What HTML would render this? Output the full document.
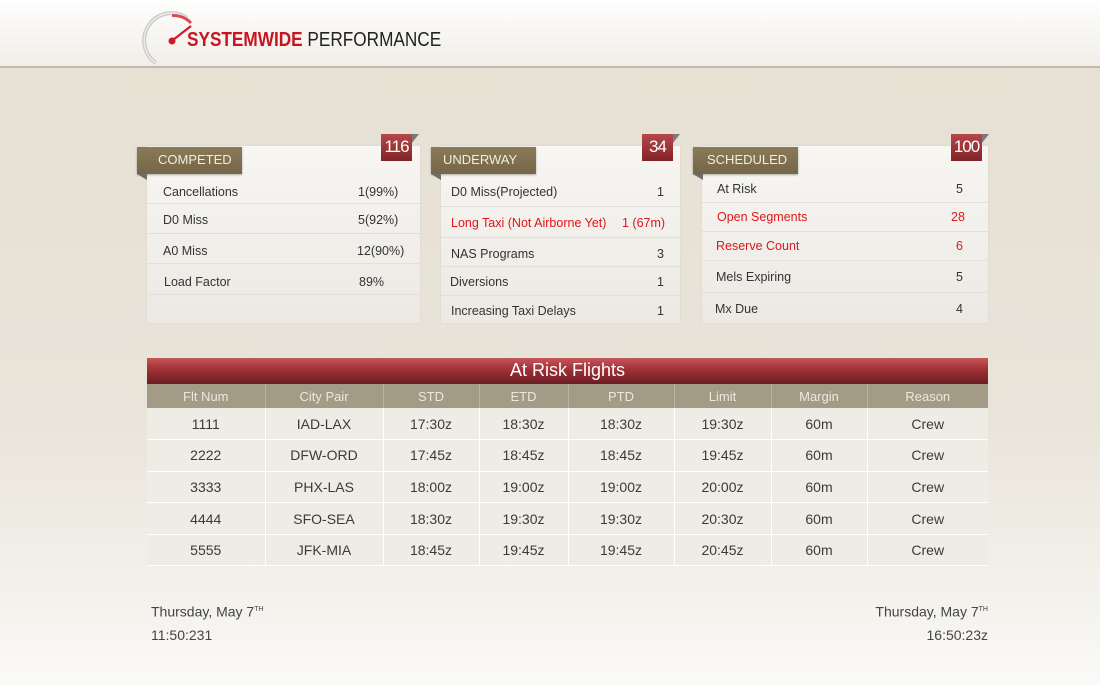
<!DOCTYPE html>
<html><head><meta charset="utf-8"><style>
*{margin:0;padding:0;box-sizing:border-box}
body{width:1100px;height:685px;overflow:hidden;font-family:"Liberation Sans","DejaVu Sans",sans-serif;background:#e9e4d9;position:relative;color:#333}
.bg{position:absolute;left:0;top:0;width:1100px;height:685px;background:linear-gradient(#e6e0d3 0,#e9e4d9 60%,#f4f2ed 88%,#fbfaf8 100%)}
.hdr{position:absolute;left:0;top:0;width:1100px;height:68px;background:linear-gradient(#fefefe,#f1eee8);border-bottom:2px solid #bfb9ae}
.a{position:absolute;white-space:nowrap}
.panel{position:absolute;background:linear-gradient(#f7f6f3,#ece9e3);box-shadow:0 0 2px rgba(0,0,0,.08)}
.tab{position:absolute;height:27px;background:linear-gradient(#8a7b58,#746646);color:#f2ede0;font-size:13px;line-height:26px;padding-left:21px;box-shadow:0 1px 2px rgba(0,0,0,.3)}
.tab:after{content:"";position:absolute;left:0;bottom:-6px;border-top:6px solid #6c6c6c;border-left:10px solid transparent}
.badge{position:absolute;height:27px;background:linear-gradient(#b5484b,#822327);color:#fff;font-size:17px;line-height:26px;text-align:center;letter-spacing:-1px}
.badge:after{content:"";position:absolute;right:-7px;top:0;border-top:9px solid #7a7a7a;border-right:7px solid transparent}
.row{position:absolute;font-size:12.5px;border-bottom:1px solid #e2e0db}
.r{color:#e0161b}
table{position:absolute;left:147px;top:384px;width:841px;border-collapse:collapse}
th{height:24px;background:#a39b86;color:#ece8dd;font-weight:normal;font-size:13px;border-left:1px solid #bab3a0}
td{height:31.6px;text-align:center;font-size:14px;color:#3a3a3a;border-left:1px solid #ffffff;border-bottom:1px solid #fff;background:#efece6}
th:first-child,td:first-child{border-left:none}
</style></head><body>
<div class="bg"></div>
<div class="hdr"></div>
<svg class="a" style="left:141px;top:8px" width="60" height="60" viewBox="0 0 60 60">
<path d="M15 55 A24 24 0 0 1 46 10" fill="none" stroke="#c9c9c9" stroke-width="4"/>
<path d="M15 55 A24 24 0 0 1 46 10" fill="none" stroke="#ececec" stroke-width="1.5"/>
<path d="M31 7.5 A24 24 0 0 1 50 15" fill="none" stroke="#d94a50" stroke-width="3"/>
<line x1="32" y1="32" x2="50" y2="18" stroke="#d11a22" stroke-width="2.2"/>
<circle cx="31" cy="33" r="3.5" fill="#d11a22"/>
</svg>
<div class="a" style="left:187px;top:29px;font-size:20px;line-height:22px;transform:scaleX(.86);transform-origin:0 0"><b style="color:#c8141f">SYSTEMWIDE</b> <span style="color:#222">PERFORMANCE</span></div>

<div class="panel" style="left:147px;top:146px;width:273px;height:177px"></div>
<div class="tab" style="left:137px;top:147px;width:105px">COMPETED</div>
<div class="badge" style="left:381px;top:134px;width:31px">116</div>
<div class="row" style="left:147px;top:180px;width:273px;height:24px"><span class="a" style="left:16px;top:5px">Cancellations</span><span class="a" style="left:211px;top:5px">1(99%)</span></div>
<div class="row" style="left:147px;top:204px;width:273px;height:30px"><span class="a" style="left:16px;top:9px">D0 Miss</span><span class="a" style="left:211px;top:9px">5(92%)</span></div>
<div class="row" style="left:147px;top:234px;width:273px;height:30px"><span class="a" style="left:16px;top:10px">A0 Miss</span><span class="a" style="left:210px;top:10px">12(90%)</span></div>
<div class="row" style="left:147px;top:264px;width:273px;height:31px"><span class="a" style="left:17px;top:11px">Load Factor</span><span class="a" style="left:212px;top:11px">89%</span></div>

<div class="panel" style="left:441px;top:146px;width:239px;height:177px"></div>
<div class="tab" style="left:431px;top:147px;width:105px;padding-left:12px">UNDERWAY</div>
<div class="badge" style="left:642px;top:134px;width:31px">34</div>
<div class="row" style="left:441px;top:178px;width:239px;height:29px"><span class="a" style="left:10px;top:7px">D0 Miss(Projected)</span><span class="a" style="left:216px;top:7px">1</span></div>
<div class="row r" style="left:441px;top:207px;width:239px;height:31px"><span class="a" style="left:10px;top:9px">Long Taxi (Not Airborne Yet)</span><span class="a" style="left:181px;top:9px">1 (67m)</span></div>
<div class="row" style="left:441px;top:238px;width:239px;height:29px"><span class="a" style="left:10px;top:9px">NAS Programs</span><span class="a" style="left:216px;top:9px">3</span></div>
<div class="row" style="left:441px;top:267px;width:239px;height:29px"><span class="a" style="left:9px;top:8px">Diversions</span><span class="a" style="left:216px;top:8px">1</span></div>
<div class="row" style="left:441px;top:296px;width:239px;height:27px;border:none"><span class="a" style="left:10px;top:8px">Increasing Taxi Delays</span><span class="a" style="left:216px;top:8px">1</span></div>

<div class="panel" style="left:702px;top:146px;width:286px;height:177px"></div>
<div class="tab" style="left:693px;top:147px;width:105px;padding-left:14px">SCHEDULED</div>
<div class="badge" style="left:951px;top:134px;width:31px">100</div>
<div class="row" style="left:702px;top:175px;width:286px;height:28px"><span class="a" style="left:15px;top:7px">At Risk</span><span class="a" style="left:254px;top:7px">5</span></div>
<div class="row r" style="left:702px;top:203px;width:286px;height:29px"><span class="a" style="left:15px;top:7px">Open Segments</span><span class="a" style="left:249px;top:7px">28</span></div>
<div class="row r" style="left:702px;top:232px;width:286px;height:29px"><span class="a" style="left:14px;top:7px">Reserve Count</span><span class="a" style="left:254px;top:7px">6</span></div>
<div class="row" style="left:702px;top:261px;width:286px;height:32px"><span class="a" style="left:14px;top:9px">Mels Expiring</span><span class="a" style="left:254px;top:9px">5</span></div>
<div class="row" style="left:702px;top:293px;width:286px;height:30px;border:none"><span class="a" style="left:13px;top:9px">Mx Due</span><span class="a" style="left:254px;top:9px">4</span></div>

<div class="a" style="left:147px;top:358px;width:841px;height:26px;background:linear-gradient(#c5575b,#9e3036 45%,#6a1d22);color:#fff;font-size:18px;line-height:25px;text-align:center">At Risk Flights</div>
<table>
<tr><th style="width:118px">Flt Num</th><th style="width:118px">City Pair</th><th style="width:96px">STD</th><th style="width:89px">ETD</th><th style="width:106px">PTD</th><th style="width:97px">Limit</th><th style="width:96px">Margin</th><th>Reason</th></tr>
<tr><td>1111</td><td>IAD-LAX</td><td>17:30z</td><td>18:30z</td><td>18:30z</td><td>19:30z</td><td>60m</td><td>Crew</td></tr>
<tr><td>2222</td><td>DFW-ORD</td><td>17:45z</td><td>18:45z</td><td>18:45z</td><td>19:45z</td><td>60m</td><td>Crew</td></tr>
<tr><td>3333</td><td>PHX-LAS</td><td>18:00z</td><td>19:00z</td><td>19:00z</td><td>20:00z</td><td>60m</td><td>Crew</td></tr>
<tr><td>4444</td><td>SFO-SEA</td><td>18:30z</td><td>19:30z</td><td>19:30z</td><td>20:30z</td><td>60m</td><td>Crew</td></tr>
<tr><td>5555</td><td>JFK-MIA</td><td>18:45z</td><td>19:45z</td><td>19:45z</td><td>20:45z</td><td>60m</td><td>Crew</td></tr>
</table>

<div class="a" style="left:151px;top:598px;font-size:14px;line-height:23px;color:#444">Thursday, May 7<sup style="font-size:7px">TH</sup><br>11:50:231</div>
<div class="a" style="right:112px;top:598px;font-size:14px;line-height:23px;color:#444;text-align:right">Thursday, May 7<sup style="font-size:7px">TH</sup><br>16:50:23z</div>
</body></html>
